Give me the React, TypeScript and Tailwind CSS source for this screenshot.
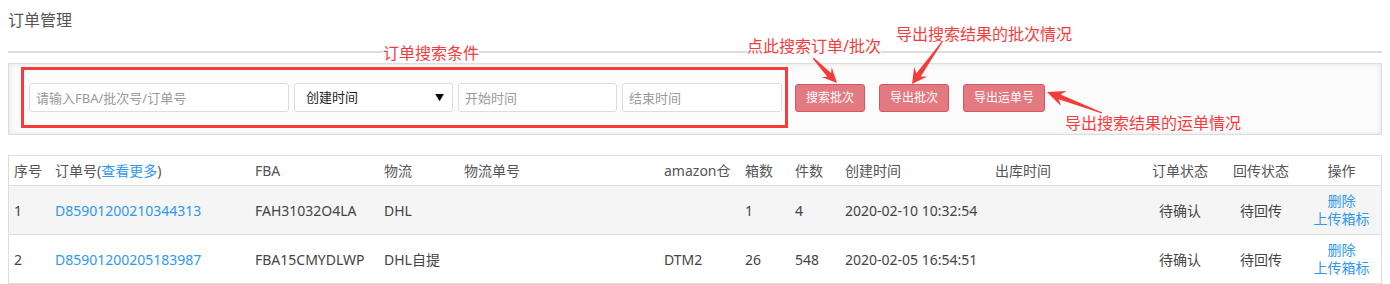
import React from 'react';

type Pt = [number, number];

// screenshot-tool style arrow: thin tail widening towards a notched head
function arrowPoints(tail: Pt, tip: Pt, headLen = 15, headHalf = 8) {
  const dx = tip[0] - tail[0];
  const dy = tip[1] - tail[1];
  const len = Math.hypot(dx, dy);
  const ux = dx / len;
  const uy = dy / len;
  const nx = -uy;
  const ny = ux;
  const at = (d: number, w: number): string =>
    `${(tip[0] - ux * d + nx * w).toFixed(1)},${(tip[1] - uy * d + ny * w).toFixed(1)}`;
  return [
    at(len, 0.6),
    at(headLen * 0.75, 2.6),
    at(headLen, headHalf),
    `${tip[0]},${tip[1]}`,
    at(headLen, -headHalf),
    at(headLen * 0.75, -2.6),
    at(len, -0.6),
  ].join(' ');
}

const rows = [
  {
    no: '1',
    order: 'D85901200210344313',
    fba: 'FAH31032O4LA',
    carrier: 'DHL',
    tracking: '',
    warehouse: '',
    boxes: '1',
    pieces: '4',
    created: '2020-02-10 10:32:54',
    shipped: '',
    status: '待确认',
    sync: '待回传',
  },
  {
    no: '2',
    order: 'D85901200205183987',
    fba: 'FBA15CMYDLWP',
    carrier: 'DHL自提',
    tracking: '',
    warehouse: 'DTM2',
    boxes: '26',
    pieces: '548',
    created: '2020-02-05 16:54:51',
    shipped: '',
    status: '待确认',
    sync: '待回传',
  },
];

const gridCols =
  'grid grid-cols-[40px_200px_129px_80px_200px_81px_50px_50px_150px_151px_80px_82px_79px]';

const App: React.FC = () => {
  return (
    <div
      className="relative w-full h-[284px] bg-white overflow-hidden"
      style={{ fontFamily: '"Noto Sans", "Noto Sans CJK SC", sans-serif' }}
    >
      <div className="px-2">
        {/* Page title */}
        <h1 className="pt-[9px] text-[16px] leading-[22px] text-[#555] font-normal">订单管理</h1>
        <div className="mt-[20px] h-[2px] bg-[#ddd]" />

        {/* Search panel */}
        <div className="mt-[10px] h-[72px] border border-[#ddd] bg-[#fcfcfc] shadow-[inset_0_0_6px_rgba(0,0,0,0.10)] pl-[12px] pt-[3px] flex items-start">
          <div className="h-[61px] border-[3px] border-[#f63b3b] pl-[5px] pr-[3px] flex items-center gap-[5px]">
            <input
              className="w-[260px] h-[29px] rounded-[3px] border border-[#ddd] bg-white px-[6px] text-[13px] text-[#333] placeholder:text-[#999] outline-none"
              placeholder="请输入FBA/批次号/订单号"
            />
            <div className="w-[159px] h-[29px] rounded-[3px] border border-[#ddd] bg-white pl-[11px] pr-[8px] flex items-center justify-between text-[13px] text-[#222]">
              <span>创建时间</span>
              <span className="text-[9px] text-black">▼</span>
            </div>
            <input
              className="w-[159px] h-[29px] rounded-[3px] border border-[#ddd] bg-white px-[6px] text-[13px] text-[#333] placeholder:text-[#999] outline-none"
              placeholder="开始时间"
            />
            <input
              className="w-[160px] h-[29px] rounded-[3px] border border-[#ddd] bg-white px-[6px] text-[13px] text-[#333] placeholder:text-[#999] outline-none"
              placeholder="结束时间"
            />
          </div>
          <div className="ml-[7px] mt-[17px] flex gap-[14px]">
            <button className="w-[70px] h-[28px] rounded-[3px] border border-[#d9545f] bg-[#e47a81] text-[12px] text-white">
              搜索批次
            </button>
            <button className="w-[70px] h-[28px] rounded-[3px] border border-[#d9545f] bg-[#e47a81] text-[12px] text-white">
              导出批次
            </button>
            <button className="w-[82px] h-[28px] rounded-[3px] border border-[#d9545f] bg-[#e47a81] text-[12px] text-white">
              导出运单号
            </button>
          </div>
        </div>

        {/* Order table */}
        <div className="mt-[20px] border border-[#ddd] text-[14px]">
          <div className={`${gridCols} h-[29px] items-center text-[#555]`}>
            <div className="pl-[5px]">序号</div>
            <div className="pl-[6px]">
              订单号(<span className="text-[#2f98ef]">查看更多</span>)
            </div>
            <div className="pl-[6px]">FBA</div>
            <div className="pl-[6px]">物流</div>
            <div className="pl-[6px]">物流单号</div>
            <div className="pl-[6px]">amazon仓</div>
            <div className="pl-[6px]">箱数</div>
            <div className="pl-[6px]">件数</div>
            <div className="pl-[6px]">创建时间</div>
            <div className="pl-[6px]">出库时间</div>
            <div className="text-center">订单状态</div>
            <div className="text-center">回传状态</div>
            <div className="text-center">操作</div>
          </div>
          {rows.map((r, i) => (
            <div
              key={r.no}
              className={`${gridCols} h-[49px] items-center border-t border-[#ddd] text-[#444] ${
                i % 2 === 0 ? 'bg-[#f5f5f5]' : 'bg-white'
              }`}
            >
              <div className="pl-[5px]">{r.no}</div>
              <div className="pl-[6px] text-[#2f98ef]">{r.order}</div>
              <div className="pl-[6px]">{r.fba}</div>
              <div className="pl-[6px]">{r.carrier}</div>
              <div className="pl-[6px]">{r.tracking}</div>
              <div className="pl-[6px]">{r.warehouse}</div>
              <div className="pl-[6px]">{r.boxes}</div>
              <div className="pl-[6px]">{r.pieces}</div>
              <div className="pl-[6px]">{r.created}</div>
              <div className="pl-[6px]">{r.shipped}</div>
              <div className="text-center">{r.status}</div>
              <div className="text-center">{r.sync}</div>
              <div className="flex flex-col items-center leading-[18px] text-[#2f98ef]">
                <span>删除</span>
                <span>上传箱标</span>
              </div>
            </div>
          ))}
        </div>
      </div>

      {/* Screenshot annotations */}
      <span className="absolute left-[383px] top-[43px] bg-white text-[16px] leading-[20px] text-[#f63b3b]">
        订单搜索条件
      </span>
      <span className="absolute left-[747px] top-[36px] bg-white text-[16px] leading-[20px] text-[#f63b3b]">
        点此搜索订单/批次
      </span>
      <span className="absolute left-[896px] top-[24px] bg-white text-[16px] leading-[20px] text-[#f63b3b]">
        导出搜索结果的批次情况
      </span>
      <span className="absolute left-[1065px] top-[113px] text-[16px] leading-[20px] text-[#f63b3b]">
        导出搜索结果的运单情况
      </span>
      <svg className="absolute left-0 top-0 pointer-events-none" width="1390" height="284">
        <polygon points={arrowPoints([813, 58], [837, 83], 15, 7)} fill="#f63b3b" />
        <polygon points={arrowPoints([942, 42], [912, 84], 15, 8)} fill="#f63b3b" />
        <polygon points={arrowPoints([1102, 113], [1047, 92], 18, 8)} fill="#f63b3b" />
      </svg>
    </div>
  );
};

export default App;
